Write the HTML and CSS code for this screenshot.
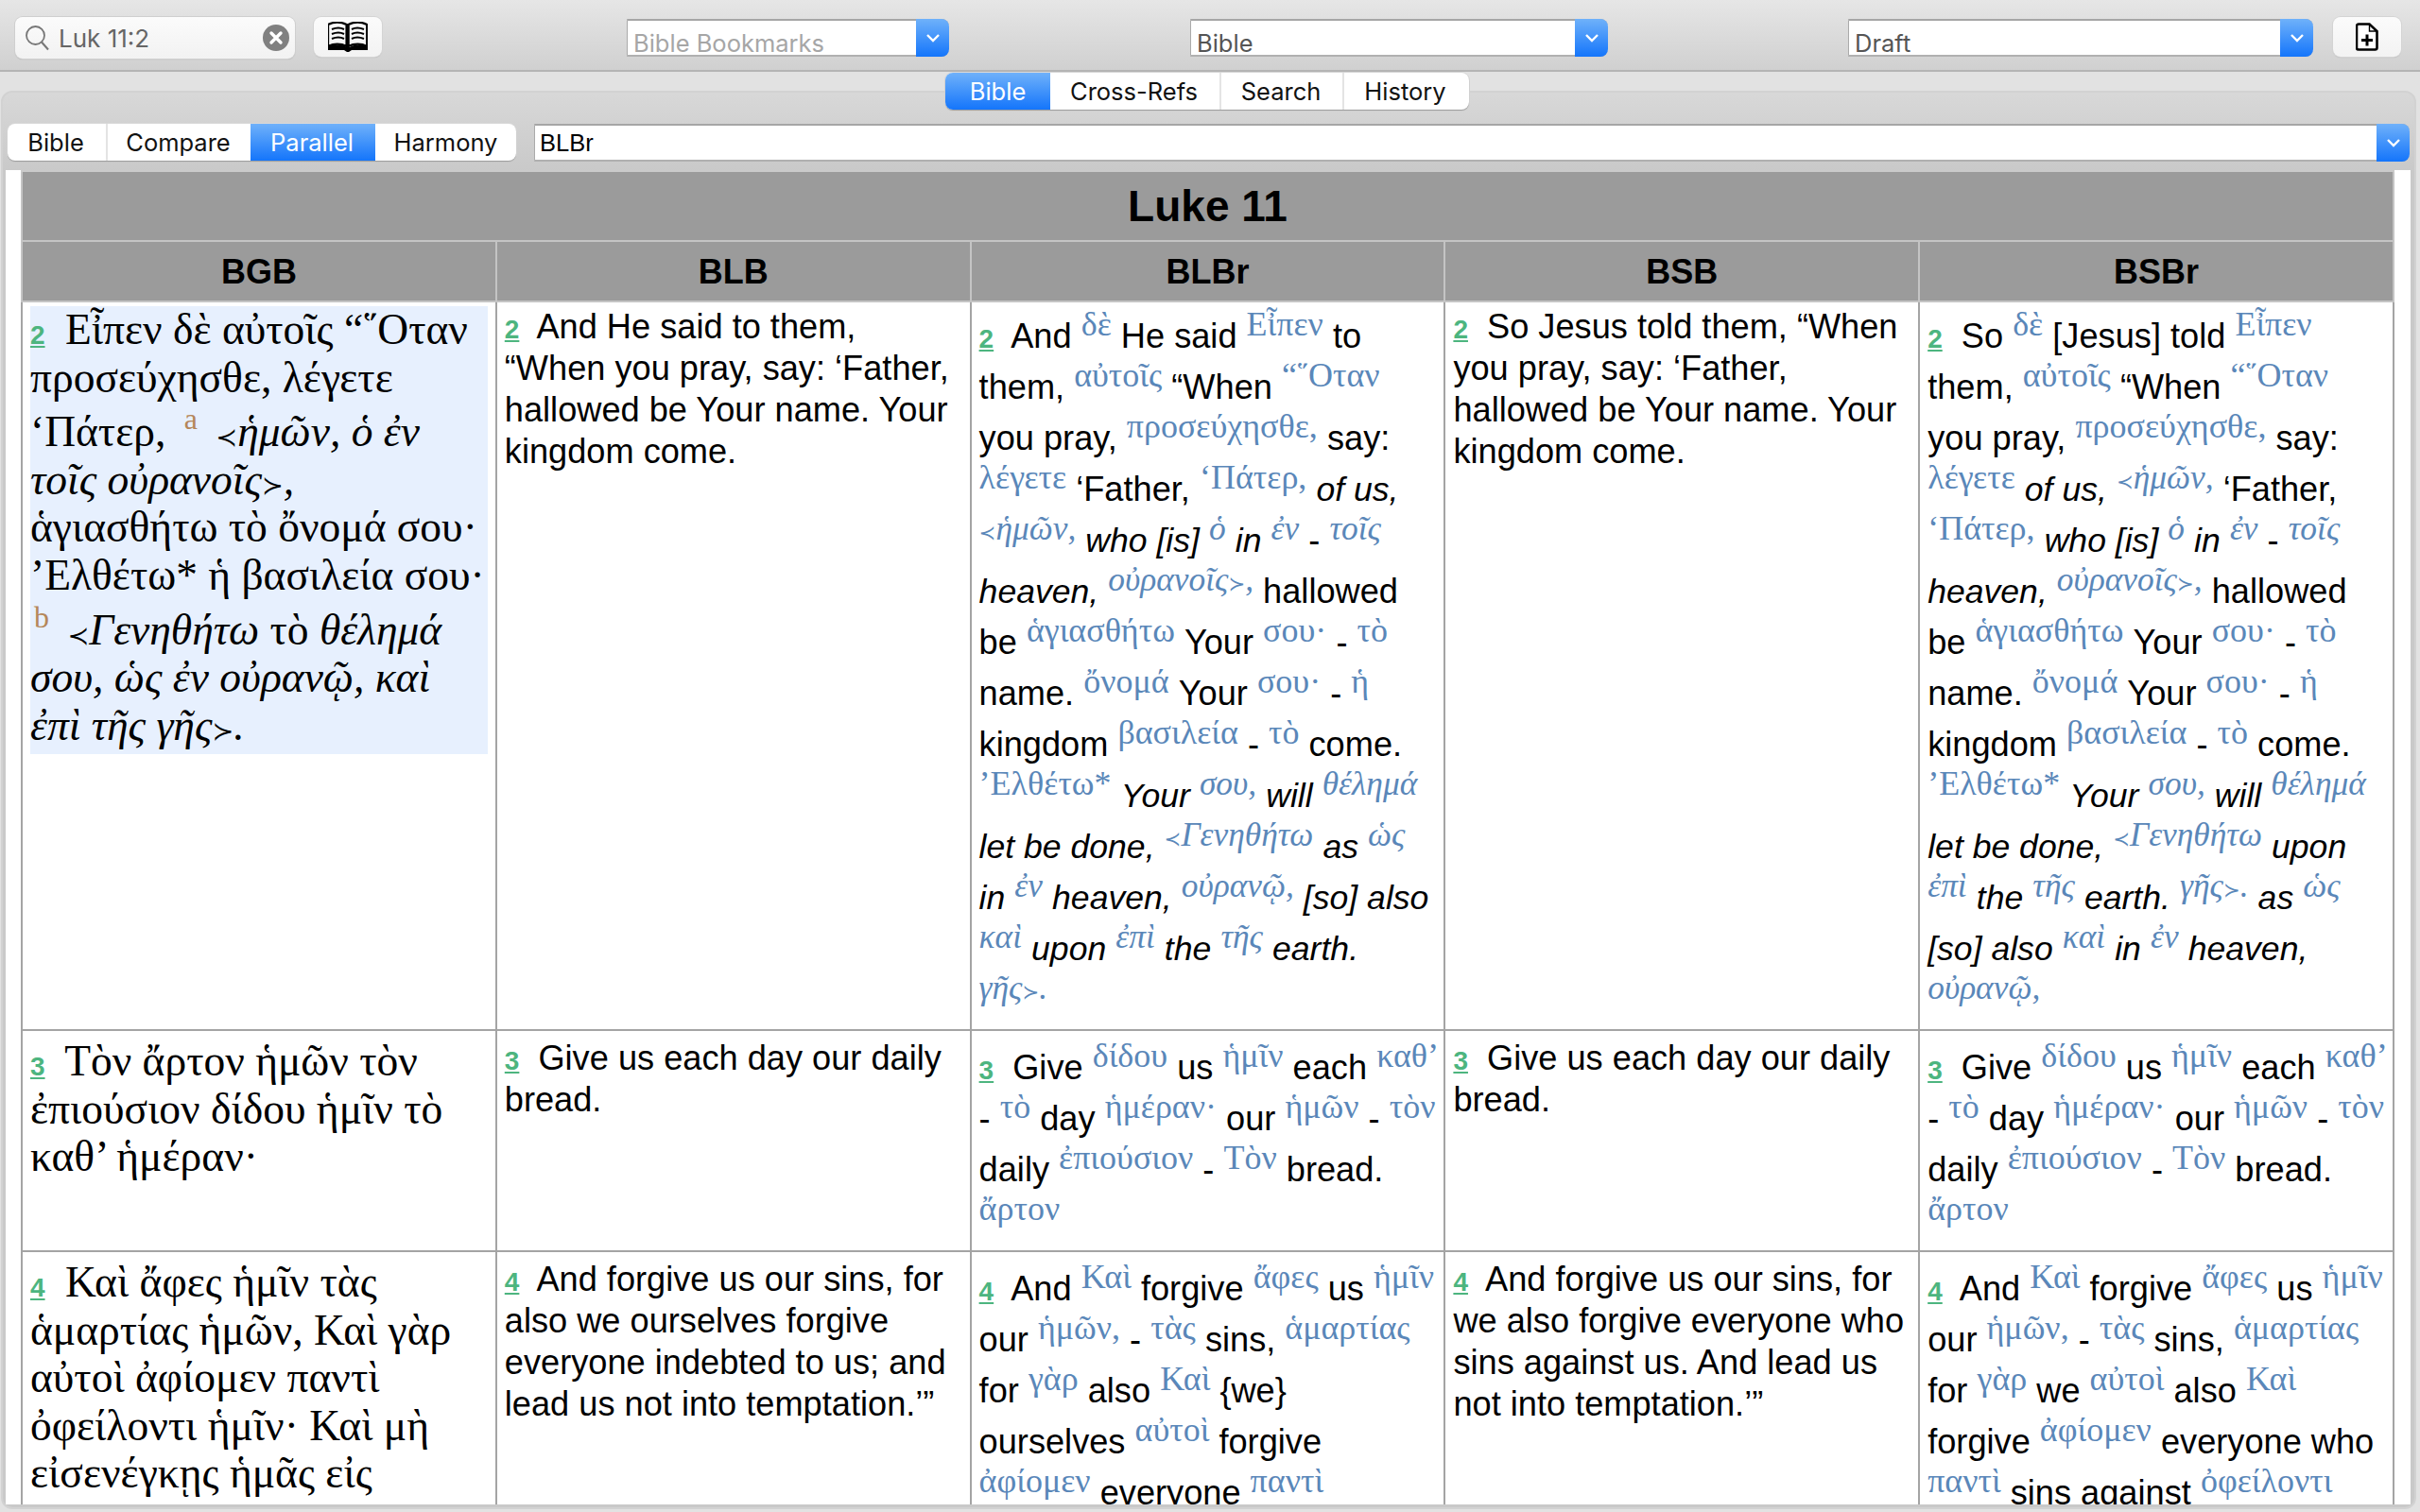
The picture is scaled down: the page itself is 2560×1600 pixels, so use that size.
FILE: index.html
```html
<!DOCTYPE html>
<html lang="en">
<head>
<meta charset="utf-8">
<title>Bible</title>
<link rel="stylesheet" href="styles.css">
</head>
<body>
<div class="window">
  <header class="toolbar">
    <div class="search">
      <svg class="search-icon" viewBox="0 0 26 28"><circle cx="11.5" cy="11.5" r="9.5" fill="none" stroke="#777" stroke-width="1.8"/><path d="M18 18.5l7 8" stroke="#777" stroke-width="2" fill="none"/></svg>
      <span class="search-text">Luk 11:2</span>
      <svg class="search-clear" viewBox="0 0 28 28"><circle cx="14" cy="14" r="14" fill="#808080"/><path d="M9 9l10 10M19 9L9 19" stroke="#fff" stroke-width="3.4" stroke-linecap="round"/></svg>
    </div>
    <button class="tool-btn">
      <svg width="42" height="32" viewBox="0 0 42 32"><path d="M0 4C6 1 14 1 20 4V27C14 24 6 24 0 27Z M22 4C28 1 36 1 42 4V27C36 24 28 24 22 27Z" fill="none" stroke="#000" stroke-width="2.4" transform="translate(0 -1) scale(.98 1)"/><path d="M4 8c5-2 9-2 13 0M4 13c5-2 9-2 13 0M4 18c5-2 9-2 13 0M25 8c4-2 8-2 13 0M25 13c4-2 8-2 13 0M25 18c4-2 8-2 13 0" stroke="#000" stroke-width="2" fill="none"/><path d="M0 26v4h17l3 2h2l3-2h17v-4c-7-2-14-2-19 1h-3C15 24 7 24 0 26Z" fill="#000"/></svg>
    </button>
    <div class="combo combo-bookmarks"><span class="combo-text placeholder">Bible Bookmarks</span><span class="combo-arrow"><svg width="16" height="10" viewBox="0 0 16 10"><path d="M2 2l6 6 6-6" fill="none" stroke="#fff" stroke-width="2.4"/></svg></span></div>
    <div class="combo combo-bible"><span class="combo-text muted">Bible</span><span class="combo-arrow"><svg width="16" height="10" viewBox="0 0 16 10"><path d="M2 2l6 6 6-6" fill="none" stroke="#fff" stroke-width="2.4"/></svg></span></div>
    <div class="combo combo-draft"><span class="combo-text muted">Draft</span><span class="combo-arrow"><svg width="16" height="10" viewBox="0 0 16 10"><path d="M2 2l6 6 6-6" fill="none" stroke="#fff" stroke-width="2.4"/></svg></span></div>
    <button class="tool-btn tool-btn-new">
      <svg width="24" height="30" viewBox="0 0 24 30"><path d="M3 1.500H14.500L22.500 9V26.500A2 2 0 0 1 20.500 28.500H3A2 2 0 0 1 1 26.500V3.500A2 2 0 0 1 3 1.500Z" fill="#fff" stroke="#000" stroke-width="2.600"/><path d="M14.500 1.500V9H22.500" fill="none" stroke="#000" stroke-width="1.400"/><path d="M6 18.500H18M12 12.500V24.500" stroke="#000" stroke-width="3"/></svg>
    </button>
  </header>

  <nav class="tabs main-tabs">
    <span class="tab active">Bible</span><span class="tab">Cross-Refs</span><span class="tab">Search</span><span class="tab">History</span>
  </nav>

  <main class="pane">
    <div class="pane-controls">
      <div class="tabs sub-tabs">
        <span class="tab">Bible</span><span class="tab">Compare</span><span class="tab active">Parallel</span><span class="tab">Harmony</span>
      </div>
      <div class="combo combo-version"><span class="combo-text version">BLBr</span><span class="combo-arrow"><svg width="16" height="10" viewBox="0 0 16 10"><path d="M2 2l6 6 6-6" fill="none" stroke="#fff" stroke-width="2.4"/></svg></span></div>
    </div>
    <div class="webview">
      <div class="table-cap"></div>
      <table class="parallel">
        <colgroup><col><col><col><col><col></colgroup>
        <thead>
          <tr class="title-row"><th colspan="5">Luke 11</th></tr>
          <tr class="head-row"><th>BGB</th><th>BLB</th><th>BLBr</th><th>BSB</th><th>BSBr</th></tr>
        </thead>
        <tbody>
          <tr class="row-v2">
            <td class="greek"><div class="current"><a class="vn">2</a> Εἶπεν δὲ αὐτοῖς “῞Οταν<br>προσεύχησθε, λέγετε<br>‘Πάτερ, <sup class="note">a</sup> <i><span class="mk">≺</span>ἡμῶν, ὁ ἐν<br>τοῖς οὐρανοῖς<span class="mk">≻</span>,</i><br>ἁγιασθήτω τὸ ὄνομά σου·<br>’Ελθέτω* ἡ βασιλεία σου·<br><sup class="note first">b</sup> <i><span class="mk">≺</span>Γενηθήτω</i> τὸ <i>θέλημά<br>σου, ὡς ἐν οὐρανῷ, καὶ<br>ἐπὶ τῆς γῆς<span class="mk">≻</span>.</i></div></td>
            <td class="plain"><a class="vn">2</a> And He said to them, “When you pray, say: ‘Father, hallowed be Your name. Your kingdom come.</td>
            <td class="inter"><a class="vn">2</a> And <b>δὲ</b> He said <b>Εἶπεν</b> to<br>them, <b>αὐτοῖς</b> “When <b>“῞Οταν</b><br>you pray, <b>προσεύχησθε,</b> say:<br><b>λέγετε</b> ‘Father, <b>‘Πάτερ,</b> <i>of us,</i><br><b><i><span class="mk">≺</span>ἡμῶν,</i></b> <i>who [is]</i> <b><i>ὁ</i></b> <i>in</i> <b><i>ἐν</i></b> - <b><i>τοῖς</i></b><br><i>heaven,</i> <b><i>οὐρανοῖς<span class="mk">≻</span>,</i></b> hallowed<br>be <b>ἁγιασθήτω</b> Your <b>σου·</b> - <b>τὸ</b><br>name. <b>ὄνομά</b> Your <b>σου·</b> - <b>ἡ</b><br>kingdom <b>βασιλεία</b> - <b>τὸ</b> come.<br><b>’Ελθέτω*</b> <i>Your</i> <b><i>σου,</i></b> <i>will</i> <b><i>θέλημά</i></b><br><i>let be done,</i> <b><i><span class="mk">≺</span>Γενηθήτω</i></b> <i>as</i> <b><i>ὡς</i></b><br><i>in</i> <b><i>ἐν</i></b> <i>heaven,</i> <b><i>οὐρανῷ,</i></b> <i>[so] also</i><br><b><i>καὶ</i></b> <i>upon</i> <b><i>ἐπὶ</i></b> <i>the</i> <b><i>τῆς</i></b> <i>earth.</i><br><b><i>γῆς<span class="mk">≻</span>.</i></b></td>
            <td class="plain"><a class="vn">2</a> So Jesus told them, “When you pray, say: ‘Father, hallowed be Your name. Your kingdom come.</td>
            <td class="inter"><a class="vn">2</a> So <b>δὲ</b> [Jesus] told <b>Εἶπεν</b><br>them, <b>αὐτοῖς</b> “When <b>“῞Οταν</b><br>you pray, <b>προσεύχησθε,</b> say:<br><b>λέγετε</b> <i>of us,</i> <b><i><span class="mk">≺</span>ἡμῶν,</i></b> ‘Father,<br><b>‘Πάτερ,</b> <i>who [is]</i> <b><i>ὁ</i></b> <i>in</i> <b><i>ἐν</i></b> - <b><i>τοῖς</i></b><br><i>heaven,</i> <b><i>οὐρανοῖς<span class="mk">≻</span>,</i></b> hallowed<br>be <b>ἁγιασθήτω</b> Your <b>σου·</b> - <b>τὸ</b><br>name. <b>ὄνομά</b> Your <b>σου·</b> - <b>ἡ</b><br>kingdom <b>βασιλεία</b> - <b>τὸ</b> come.<br><b>’Ελθέτω*</b> <i>Your</i> <b><i>σου,</i></b> <i>will</i> <b><i>θέλημά</i></b><br><i>let be done,</i> <b><i><span class="mk">≺</span>Γενηθήτω</i></b> <i>upon</i><br><b><i>ἐπὶ</i></b> <i>the</i> <b><i>τῆς</i></b> <i>earth.</i> <b><i>γῆς<span class="mk">≻</span>.</i></b> <i>as</i> <b><i>ὡς</i></b><br><i>[so] also</i> <b><i>καὶ</i></b> <i>in</i> <b><i>ἐν</i></b> <i>heaven,</i><br><b><i>οὐρανῷ,</i></b></td>
          </tr>
          <tr class="row-v3">
            <td class="greek"><a class="vn">3</a> Τὸν ἄρτον ἡμῶν τὸν<br>ἐπιούσιον δίδου ἡμῖν τὸ<br>καθ’ ἡμέραν·</td>
            <td class="plain"><a class="vn">3</a> Give us each day our daily bread.</td>
            <td class="inter"><a class="vn">3</a> Give <b>δίδου</b> us <b>ἡμῖν</b> each <b>καθ’</b><br>- <b>τὸ</b> day <b>ἡμέραν·</b> our <b>ἡμῶν</b> - <b>τὸν</b><br>daily <b>ἐπιούσιον</b> - <b>Τὸν</b> bread.<br><b>ἄρτον</b></td>
            <td class="plain"><a class="vn">3</a> Give us each day our daily bread.</td>
            <td class="inter"><a class="vn">3</a> Give <b>δίδου</b> us <b>ἡμῖν</b> each <b>καθ’</b><br>- <b>τὸ</b> day <b>ἡμέραν·</b> our <b>ἡμῶν</b> - <b>τὸν</b><br>daily <b>ἐπιούσιον</b> - <b>Τὸν</b> bread.<br><b>ἄρτον</b></td>
          </tr>
          <tr class="row-v4">
            <td class="greek"><a class="vn">4</a> Καὶ ἄφες ἡμῖν τὰς<br>ἁμαρτίας ἡμῶν, Καὶ γὰρ<br>αὐτοὶ ἀφίομεν παντὶ<br>ὀφείλοντι ἡμῖν· Καὶ μὴ<br>εἰσενέγκῃς ἡμᾶς εἰς<br>πειρασμόν.</td>
            <td class="plain"><a class="vn">4</a> And forgive us our sins, for also we ourselves forgive everyone indebted to us; and lead us not into temptation.’”</td>
            <td class="inter"><a class="vn">4</a> And <b>Καὶ</b> forgive <b>ἄφες</b> us <b>ἡμῖν</b><br>our <b>ἡμῶν,</b> - <b>τὰς</b> sins, <b>ἁμαρτίας</b><br>for <b>γὰρ</b> also <b>Καὶ</b> {we}<br>ourselves <b>αὐτοὶ</b> forgive<br><b>ἀφίομεν</b> everyone <b>παντὶ</b><br>indebted <b>ὀφείλοντι</b></td>
            <td class="plain"><a class="vn">4</a> And forgive us our sins, for we also forgive everyone who sins against us. And lead us not into temptation.’”</td>
            <td class="inter"><a class="vn">4</a> And <b>Καὶ</b> forgive <b>ἄφες</b> us <b>ἡμῖν</b><br>our <b>ἡμῶν,</b> - <b>τὰς</b> sins, <b>ἁμαρτίας</b><br>for <b>γὰρ</b> we <b>αὐτοὶ</b> also <b>Καὶ</b><br>forgive <b>ἀφίομεν</b> everyone who<br><b>παντὶ</b> sins against <b>ὀφείλοντι</b></td>
          </tr>
        </tbody>
      </table>
    </div>
  </main>
</div>
</body>
</html>
```
FILE: styles.css
```css
* { box-sizing: border-box; }
html, body { margin: 0; height: 100%; overflow: hidden; }
body { background: #e2e2e2; font-family: "Liberation Sans", Arial, sans-serif; color: #000; }
.window { width: 2560px; height: 1600px; display: flex; flex-direction: column; overflow: hidden; background: #e2e2e2; }

.toolbar { height: 76px; flex: none; display: flex; align-items: flex-start; padding: 18px 20px 0 16px; border-bottom: 2px solid #b4b4b4; background: linear-gradient(#e6e6e6, #d0d0d0); }
.search { width: 296px; height: 44px; display: flex; align-items: center; padding: 0 6px 0 10px; background: linear-gradient(#fbfbfb, #f2f2f2); border-radius: 8px; box-shadow: 0 0 0 1px #cfcfcf, 0 1px 1px #aaa; }
.search-icon { width: 26px; height: 28px; flex: none; margin-right: 10px; }
.search-text { flex: 1; font: 26px "Inter", "Liberation Sans", sans-serif; color: #666; }
.search-clear { width: 28px; height: 28px; flex: none; }
.tool-btn { width: 72px; height: 42px; flex: none; margin: 0 0 0 20px; padding: 0; display: flex; align-items: center; justify-content: center; background: linear-gradient(#fbfbfb, #f3f3f3); border: 0; border-radius: 8px; box-shadow: 0 0 0 1px #d4d4d4, 0 1px 1px #b0b0b0; }
.tool-btn-new { margin-left: 21px; }

.combo { height: 40px; flex: none; display: flex; background: #fff; border-top: 2px solid #a6a6a6; border-bottom: 2px solid #b0b0b0; border-left: 1px solid #aaa; border-radius: 0 8px 8px 0; }
.combo-bookmarks { width: 341px; margin: 2px 0 0 259px; }
.combo-bible { width: 442px; margin: 2px 0 0 255px; }
.combo-draft { width: 492px; margin: 2px 0 0 254px; }
.combo-version { flex: 1; margin-left: 19px; }
.combo-text { flex: 1; padding: 11px 0 0 6px; font: 25.5px/25px "Inter", "Liberation Sans", sans-serif; white-space: nowrap; }
.combo-text.placeholder { color: #a6a6a6; }
.combo-text.muted { color: #555; }
.combo-text.version { padding: 6px 0 0 5px; font-family: "Liberation Sans", sans-serif; font-size: 25.5px; color: #000; }
.combo-arrow { width: 35px; margin: -2px 0; flex: none; display: flex; align-items: center; justify-content: center; background: linear-gradient(#6fb1fa, #1475fb); border-radius: 0 8px 8px 0; }

.tabs { display: flex; background: #fff; border-radius: 8px; box-shadow: 0 1px 1px #9a9a9a, 0 0 0 1px #d8d8d8; overflow: hidden; font: 25.5px "Inter", "Liberation Sans", sans-serif; color: #111; }
.tab { display: flex; align-items: center; justify-content: center; border-left: 2px solid #e4e4e4; }
.tab:first-child, .tab.active, .tab.active + .tab { border-left: 0; }
.tab.active { color: #fff; background: linear-gradient(#6fb1fa, #1475fb); }
.main-tabs { height: 39px; flex: none; margin: 1px 0 0 1000px; width: 554px; position: relative; z-index: 2; }
.main-tabs .tab:nth-child(1) { width: 111px; }
.main-tabs .tab:nth-child(2) { width: 179px; padding-right: 2px; }
.main-tabs .tab:nth-child(3) { width: 130px; padding-right: 2px; }
.main-tabs .tab:nth-child(4) { width: 134px; padding-right: 3px; }

.pane { flex: 1; min-height: 0; margin: -20px 4px 3px 1px; display: flex; flex-direction: column; border: 2px solid #d2d2d2; border-radius: 12px; background: linear-gradient(#d8d8d8, #c9c9c9 84px); }
.pane-controls { flex: none; display: flex; align-items: flex-start; height: 82px; padding: 33px 5px 0 5px; }
.sub-tabs { height: 39px; flex: none; width: 538px; }
.sub-tabs .tab:nth-child(1) { width: 104px; padding-right: 2px; }
.sub-tabs .tab:nth-child(2) { width: 153px; padding-right: 2px; }
.sub-tabs .tab:nth-child(3) { width: 132px; padding-right: 2px; }
.sub-tabs .tab:nth-child(4) { width: 149px; }

.webview { flex: 1; min-height: 0; margin: 0 4px 3px 3px; background: #fff; overflow: hidden; padding: 2px 16px 0 16px; position: relative; }
.table-cap { position: absolute; left: 16px; width: 2511px; top: 0; height: 2px; background: #cacaca; }

.parallel { width: 2511px; table-layout: fixed; border-collapse: collapse; }
.parallel th { background: #9b9b9b; border: 2px solid #c4c4c4; font-weight: 700; text-align: center; padding: 0; }
.title-row th { height: 73px; font-size: 46px; border-top: 0; }
.head-row th { height: 64px; font-size: 36px; padding-top: 2px; }
.parallel td { vertical-align: top; border: 2px solid #a4a4a4; padding: 4px 8px; word-wrap: break-word; }
.row-v2 td { height: 771px; border-top-color: #c4c4c4; }
.parallel .row-v3 td { height: 234px; padding-top: 7px; }
.parallel .row-v4 td { height: 300px; padding-top: 7px; }

.plain { font-size: 36.2px; line-height: 44px; }
.greek { font: 45.5px/50.6px "Liberation Serif", "Times New Roman", serif; white-space: nowrap; }
.inter { font-size: 36.2px; line-height: 44px; white-space: nowrap; }
.inter i { font-size: 35.6px; }
.inter b { font: 400 36px/38px "Liberation Serif", "Times New Roman", serif; color: #5a87b9; vertical-align: 13px; }
.inter b i { font-style: italic; font-size: 35.4px; }
.current { background: #e7f0fe; padding-bottom: 5px; }
.vn { font: 700 28px "Liberation Sans", sans-serif; color: #4db57f; text-decoration: underline; margin-right: 10px; }
.note { font: 32px "Liberation Serif", serif; color: #b5875a; vertical-align: 18px; margin: 0 8px; }
.note.first { margin-left: 4px; }
.mk { font-family: "DejaVu Sans", sans-serif; font-size: .6em; font-style: normal; line-height: 0; }
```
